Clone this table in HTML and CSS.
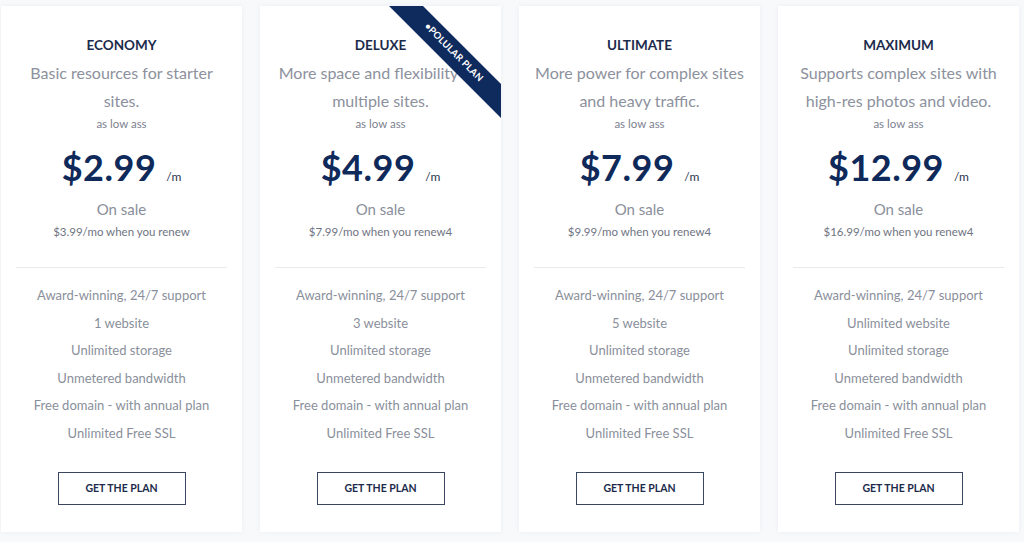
FILE: index.html
```html
<!DOCTYPE html>
<html lang="en">
<head>
<meta charset="utf-8">
<title>Plans</title>
<link rel="stylesheet" href="styles.css">
</head>
<body>
<main class="plans">
  <section class="card">
    <h2 class="title">ECONOMY</h2>
    <p class="desc">Basic resources for starter<br>sites.</p>
    <p class="low">as low ass</p>
    <p class="price"><span class="amount">$2.99</span><span class="per">/m</span></p>
    <p class="sale">On sale</p>
    <p class="renew">$3.99/mo when you renew</p>
    <hr class="divider">
    <ul class="features">
      <li>Award-winning, 24/7 support</li>
      <li>1 website</li>
      <li>Unlimited storage</li>
      <li>Unmetered bandwidth</li>
      <li>Free domain - with annual plan</li>
      <li>Unlimited Free SSL</li>
    </ul>
    <a class="btn" href="#">GET THE PLAN</a>
  </section>
  <section class="card">
    <div class="ribbon">•POLULAR PLAN</div>
    <h2 class="title">DELUXE</h2>
    <p class="desc">More space and flexibility for<br>multiple sites.</p>
    <p class="low">as low ass</p>
    <p class="price"><span class="amount">$4.99</span><span class="per">/m</span></p>
    <p class="sale">On sale</p>
    <p class="renew">$7.99/mo when you renew4</p>
    <hr class="divider">
    <ul class="features">
      <li>Award-winning, 24/7 support</li>
      <li>3 website</li>
      <li>Unlimited storage</li>
      <li>Unmetered bandwidth</li>
      <li>Free domain - with annual plan</li>
      <li>Unlimited Free SSL</li>
    </ul>
    <a class="btn" href="#">GET THE PLAN</a>
  </section>
  <section class="card">
    <h2 class="title">ULTIMATE</h2>
    <p class="desc">More power for complex sites<br>and heavy traffic.</p>
    <p class="low">as low ass</p>
    <p class="price"><span class="amount">$7.99</span><span class="per">/m</span></p>
    <p class="sale">On sale</p>
    <p class="renew">$9.99/mo when you renew4</p>
    <hr class="divider">
    <ul class="features">
      <li>Award-winning, 24/7 support</li>
      <li>5 website</li>
      <li>Unlimited storage</li>
      <li>Unmetered bandwidth</li>
      <li>Free domain - with annual plan</li>
      <li>Unlimited Free SSL</li>
    </ul>
    <a class="btn" href="#">GET THE PLAN</a>
  </section>
  <section class="card">
    <h2 class="title">MAXIMUM</h2>
    <p class="desc">Supports complex sites with<br>high-res photos and video.</p>
    <p class="low">as low ass</p>
    <p class="price"><span class="amount">$12.99</span><span class="per">/m</span></p>
    <p class="sale">On sale</p>
    <p class="renew">$16.99/mo when you renew4</p>
    <hr class="divider">
    <ul class="features">
      <li>Award-winning, 24/7 support</li>
      <li>Unlimited website</li>
      <li>Unlimited storage</li>
      <li>Unmetered bandwidth</li>
      <li>Free domain - with annual plan</li>
      <li>Unlimited Free SSL</li>
    </ul>
    <a class="btn" href="#">GET THE PLAN</a>
  </section>
</main>
</body>
</html>
```
FILE: styles.css
```css
* { box-sizing: border-box; }
html, body { margin: 0; padding: 0; }
body {
  background: #f8f9fb;
  font-family: Lato, "Open Sans", sans-serif;
  width: 1024px;
  height: 542px;
  overflow: hidden;
}
.plans {
  display: flex;
  gap: 18px;
  padding: 6px 0 0 1px;
}
.card {
  position: relative;
  overflow: hidden;
  width: 241px;
  height: 526px;
  background: #fff;
  box-shadow: 0 0 6px rgba(30, 40, 70, 0.05);
  display: flex;
  flex-direction: column;
  align-items: center;
  text-align: center;
  padding: 30px 0 0;
}
.card p, .card h2, .card ul { margin: 0; }
.title {
  font-size: 13.5px;
  line-height: 18px;
  font-weight: 700;
  color: #1c2b4b;
}
.desc {
  margin-top: 5px !important;
  font-size: 16px;
  line-height: 28px;
  color: #8c919d;
}
.low {
  margin-top: 1px !important;
  font-size: 11.5px;
  line-height: 16px;
  color: #7d828f;
}
.price {
  margin-top: 11px !important;
  height: 48px;
  line-height: 48px;
  color: #0f2a5a;
  display: flex;
  align-items: baseline;
  justify-content: center;
}
.amount {
  font-size: 36px;
  font-weight: 700;
  letter-spacing: 0.5px;
}
.per {
  font-size: 12px;
  margin-left: 10px;
  color: #2b3550;
}
.sale {
  margin-top: 7px !important;
  font-size: 15px;
  line-height: 22px;
  color: #8a8f9b;
}
.renew {
  margin-top: 3px !important;
  font-size: 11.5px;
  line-height: 18px;
  color: #6f7482;
}
.divider {
  align-self: stretch;
  margin: 26px 15px 0;
  border: 0;
  height: 1px;
  background: #e8eaee;
}
.features {
  list-style: none;
  padding: 0;
  margin-top: 14px !important;
  font-size: 13px;
  line-height: 27.6px;
  color: #8a8f9b;
}
.btn {
  margin-top: 24px;
  width: 128px;
  height: 33px;
  display: flex;
  align-items: center;
  justify-content: center;
  border: 1px solid #3a4560;
  color: #1c2b4b;
  font-size: 10.5px;
  font-weight: 700;
  text-decoration: none;
}
.ribbon {
  position: absolute;
  left: 108px;
  top: 35px;
  width: 170px;
  height: 24px;
  transform: rotate(45deg);
  background: #0f2a5c;
  color: #fff;
  font-size: 9.5px;
  line-height: 22px;
  font-weight: 700;
  text-align: center;
  letter-spacing: 0.2px;
}
```
